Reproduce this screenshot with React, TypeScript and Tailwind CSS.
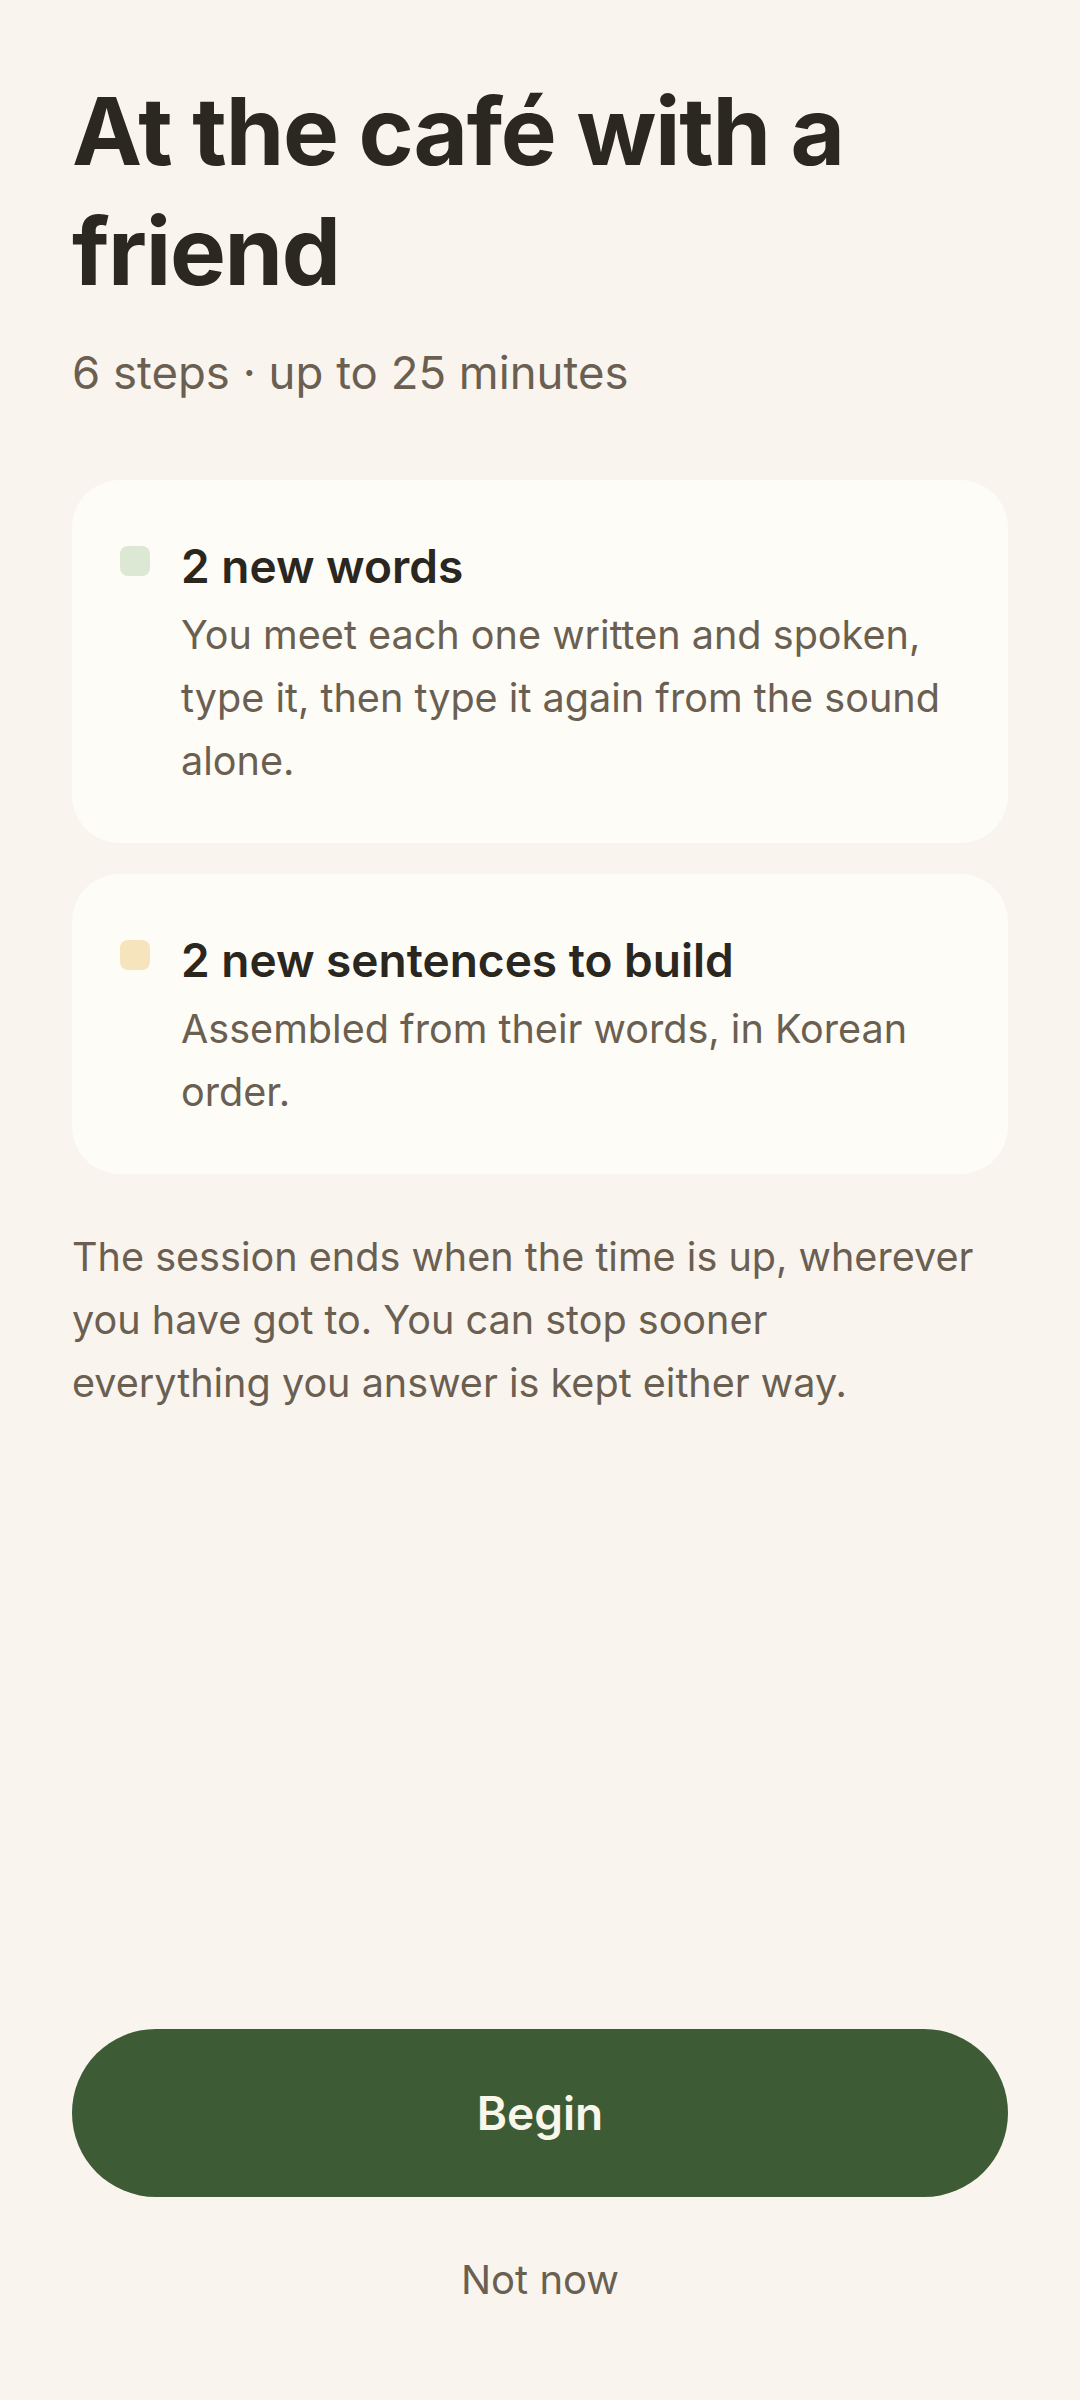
import React from "react";

type Step = {
  dot: string;
  title: string;
  body: string;
};

const steps: Step[] = [
  {
    dot: "bg-[#dce8d3]",
    title: "2 new words",
    body: "You meet each one written and spoken, type it, then type it again from the sound alone.",
  },
  {
    dot: "bg-[#f6e4bd]",
    title: "2 new sentences to build",
    body: "Assembled from their words, in Korean order.",
  },
];

function StepCard({ dot, title, body }: Step) {
  return (
    <div className="flex gap-[31px] rounded-[48px] bg-[#fefcf6] px-[48px] pt-[56px] pb-[50px]">
      <div className={"mt-[10px] h-[30px] w-[30px] shrink-0 rounded-[8px] " + dot} />
      <div className="flex flex-col gap-[8px]">
        <div className="text-[46px] leading-[60px] font-semibold text-[#2a2620]">
          {title}
        </div>
        <div className="text-[39.6px] leading-[63px] text-[#6b5f52]">{body}</div>
      </div>
    </div>
  );
}

export default function App() {
  return (
    <div
      className="flex min-h-screen flex-col bg-[#f9f5ee] px-[72px] pt-[71px] pb-[90px]"
      style={{ fontFamily: "Inter, 'Noto Sans', sans-serif" }}
    >
      <h1 className="text-[94px] leading-[120px] font-bold tracking-[-0.014em] text-[#2b2721]">
        At the café with a friend
      </h1>
      <div className="mt-[32px] text-[45.5px] leading-[60px] text-[#6b5f52]">
        6 steps · up to 25 minutes
      </div>

      <div className="mt-[77px] flex flex-col gap-[31px]">
        {steps.map((s) => (
          <StepCard key={s.title} {...s} />
        ))}
      </div>

      <p className="mt-[52px] text-[39.6px] leading-[63px] text-[#6b5f52]">
        The session ends when the time is up, wherever you have got to. You can
        stop sooner
        <br />
        everything you answer is kept either way.
      </p>

      <div className="flex-1" />

      <button className="h-[168px] w-full rounded-full bg-[#3d5c35] text-[46px] font-semibold text-[#fbf6ea]">
        Begin
      </button>
      <button className="mt-[53px] text-[40px] leading-[60px] text-[#6b5f52]">
        Not now
      </button>
    </div>
  );
}
